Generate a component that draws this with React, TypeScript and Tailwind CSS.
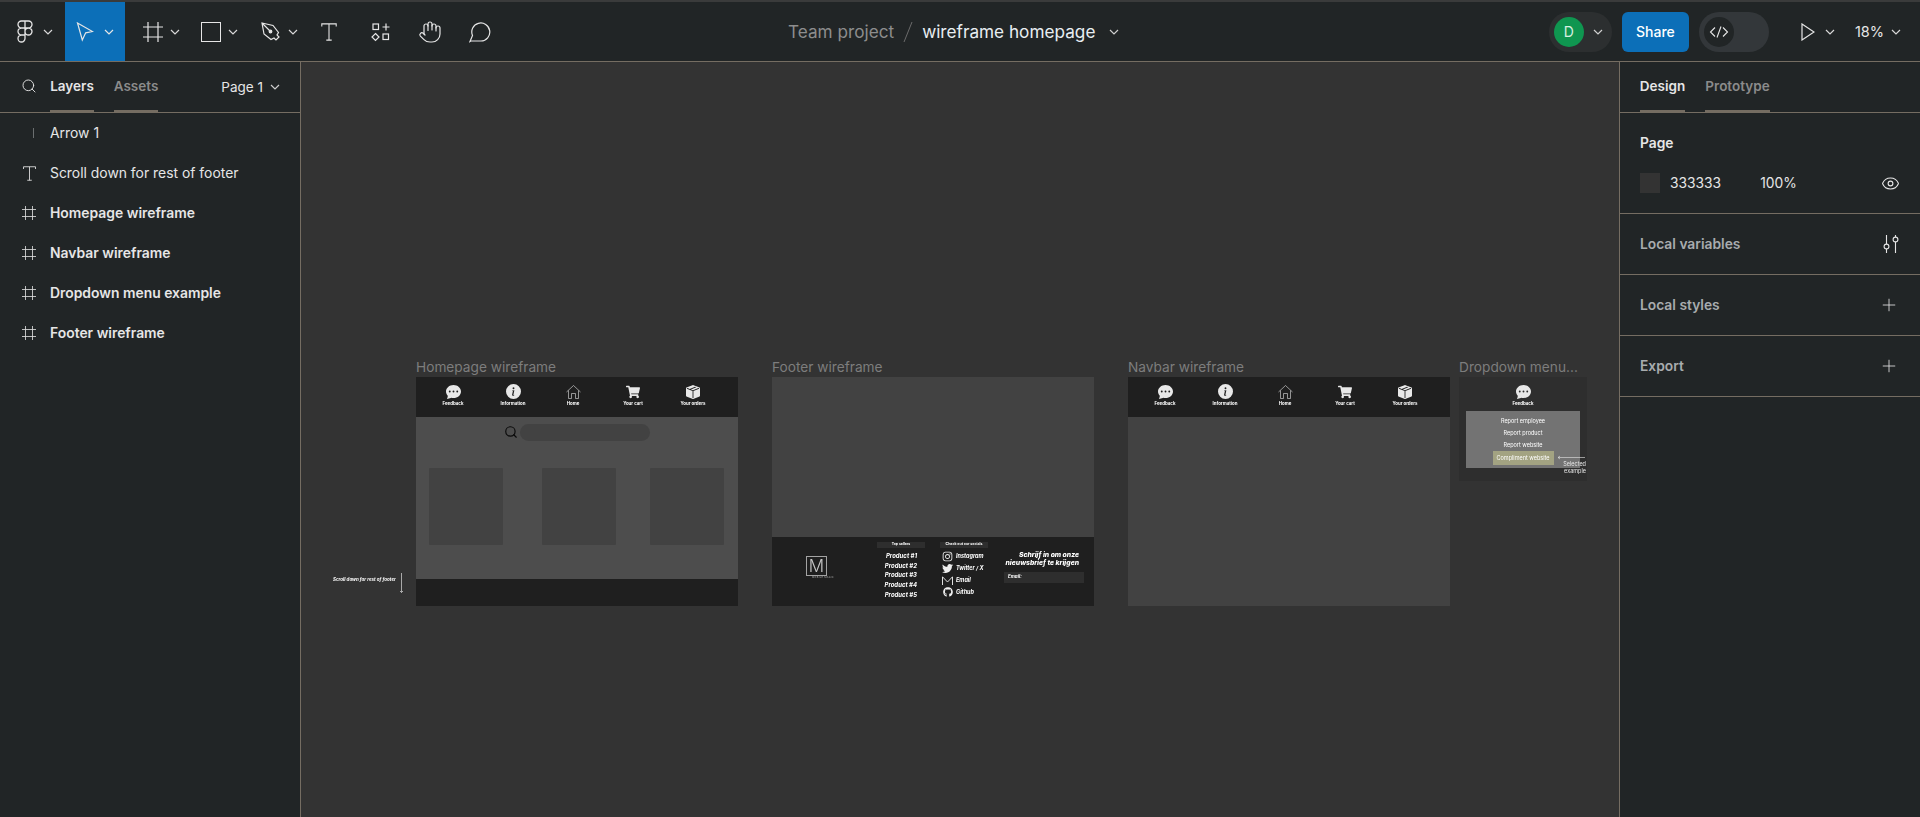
import { Eye, Hand, Plus, Search } from 'lucide-react';
import { BsBoxSeamFill, BsChatDotsFill, BsInfoCircleFill } from 'react-icons/bs';
import { FaGithub, FaInstagram, FaShoppingCart, FaTwitter } from 'react-icons/fa';

const inter = '[font-family:Inter,sans-serif]';

function Chevron({ className = '' }: { className?: string }) {
  return (
    <svg width="10" height="6" viewBox="0 0 10 6" fill="none" className={className}>
      <path d="M1 1l4 4 4-4" stroke="currentColor" strokeWidth="1.2" />
    </svg>
  );
}

function FrameIcon({ size = 20 }: { size?: number }) {
  return (
    <svg width={size} height={size} viewBox="0 0 20 20" fill="none" stroke="currentColor" strokeWidth="1.2">
      <path d="M5 0v20M15 0v20M0 5h20M0 15h20" />
    </svg>
  );
}

function TextIcon({ size = 18 }: { size?: number }) {
  return (
    <svg width={size} height={size} viewBox="0 0 18 20" fill="none" stroke="currentColor" strokeWidth="1.2">
      <path d="M1 4V1h16v3M9 1v18M6 19h6" />
    </svg>
  );
}

function FigmaLogo() {
  return (
    <svg width="16" height="24" viewBox="0 0 16 24" fill="none" stroke="currentColor" strokeWidth="1.3">
      <path d="M8 1H4.5a3.5 3.5 0 0 0 0 7H8zM8 1h3.5a3.5 3.5 0 0 1 0 7H8zM8 8H4.5a3.5 3.5 0 0 0 0 7H8zM8 11.500a3.500 3.500 0 1 1 7 0 3.500 3.500 0 0 1-7 0zM8 15H4.500a3.500 3.500 0 1 0 3.500 3.500z" />
    </svg>
  );
}

function CursorIcon() {
  return (
    <svg width="18" height="20" viewBox="0 0 18 20" fill="none" stroke="currentColor" strokeWidth="1.2">
      <path d="M1.500 1l15 8.500-6.800 1.300-3.400 7.200z" />
    </svg>
  );
}

function PenIcon() {
  return (
    <svg width="20" height="20" viewBox="0 0 20 20" fill="none" stroke="currentColor" strokeWidth="1.2">
      <path d="M1 1l11 2.500 5.500 7-1.500 2.500 2 2-3 3-2-2-3 1.500-7-5.500zM1 1l7.500 7.500" />
      <circle cx="9.500" cy="9.500" r="1.300" fill="currentColor" />
    </svg>
  );
}

function ActionsIcon() {
  return (
    <svg width="20" height="20" viewBox="0 0 20 20" fill="none" stroke="currentColor" strokeWidth="1.2">
      <rect x="2" y="2" width="5.500" height="5.500" />
      <path d="M15 1.500v7M11.500 5h7" />
      <path d="M4.500 11.500l3.500 3.500-3.500 3.500L1 15z" />
      <rect x="12" y="12" width="5.500" height="5.500" />
    </svg>
  );
}

function CommentIcon() {
  return (
    <svg width="22" height="22" viewBox="0 0 22 22" fill="none" stroke="currentColor" strokeWidth="1.2">
      <path d="M1 20.500l2.500-6A9 9 0 1 1 12 20H2z" />
    </svg>
  );
}

function VariablesIcon() {
  return (
    <svg width="16" height="18" viewBox="0 0 16 18" fill="none" stroke="currentColor" strokeWidth="1.1">
      <path d="M3.500 0v9M3.500 14v4M12.500 0v2M12.500 7v11" />
      <circle cx="3.500" cy="11.500" r="2.400" />
      <circle cx="12.500" cy="4.500" r="2.400" />
    </svg>
  );
}

function HomeGlyph() {
  return (
    <svg width="15" height="14" viewBox="0 0 15 14" fill="none" stroke="#e5e5e5" strokeWidth="0.6">
      <path d="M0.500 7L7.500 0.500 14.500 7M2.500 5.500V13.500H5.500V8.500H9.500V13.500H12.500V5.500" />
    </svg>
  );
}

function MailGlyph() {
  return (
    <svg width="11" height="9" viewBox="0 0 11 9" fill="none" stroke="#f5f5f5" strokeWidth="0.9">
      <path d="M0.500 9V0.800L5.500 6 10.500 0.800V9" />
    </svg>
  );
}

function ToolGroup({ children, chevron = true }: { children: React.ReactNode; chevron?: boolean }) {
  return (
    <div className="flex h-full items-center gap-[7px]">
      {children}
      {chevron && <Chevron className="text-[#d8d8d8]" />}
    </div>
  );
}

function Toolbar() {
  return (
    <header className={`flex h-[62px] shrink-0 items-stretch border-t-2 border-b border-t-[#3a3b3b] border-b-[#756d62] bg-[#212526] text-[#e6e6e6] ${inter}`}>
      <div className="flex w-[788px] shrink-0 items-center">
        <div className="ml-[17px] flex w-[48px] items-center gap-[10px]">
          <FigmaLogo />
          <Chevron className="text-[#d8d8d8]" />
        </div>
        <div className="flex h-full w-[60px] items-center justify-center gap-[10px] bg-[#0c6fb8]">
          <CursorIcon />
          <Chevron />
        </div>
        <div className="ml-[18px] flex h-full items-center">
          <ToolGroup><FrameIcon /></ToolGroup>
          <div className="ml-[21px]"><ToolGroup><div className="h-[20px] w-[20px] border border-[#e6e6e6]" /></ToolGroup></div>
          <div className="ml-[23px]"><ToolGroup><PenIcon /></ToolGroup></div>
        </div>
        <div className="ml-[22px]"><TextIcon /></div>
        <div className="ml-[33px]"><ActionsIcon /></div>
        <div className="ml-[27px]"><Hand size={24} strokeWidth={1.2} /></div>
        <div className="ml-[27px]"><CommentIcon /></div>
      </div>

      <div className="flex items-center pt-[1px] text-[17.200px]">
        <span className="text-[#8d8d8d]">Team project</span>
        <svg width="10" height="22" viewBox="0 0 10 22" className="mx-[9px] text-[#6b6b6b]" stroke="currentColor">
          <path d="M9 1L1 21" />
        </svg>
        <span className="text-[#e8eef2]">wireframe homepage</span>
        <Chevron className="ml-[14px] text-[#cfcfcf]" />
      </div>

      <div className="ml-auto flex items-center pr-[19px]">
        <div className="flex h-[40px] w-[63px] items-center rounded-full bg-[#2c2f30] pl-[5px]">
          <div className="flex h-[30px] w-[30px] items-center justify-center rounded-full bg-[#0f9650] text-[14px] text-[#d9f0e2]">D</div>
          <Chevron className="ml-[9px] text-[#cfcfcf]" />
        </div>
        <div className="ml-[10px] flex h-[40px] w-[67px] items-center justify-center rounded-md bg-[#0c6fb8] text-[14px] font-medium text-white">Share</div>
        <div className="ml-[10px] flex h-[40px] w-[70px] items-center rounded-full bg-[#33373a] pl-[5px]">
          <div className="flex h-[30px] w-[30px] items-center justify-center rounded-full bg-[#212526]">
            <svg width="20" height="12" viewBox="0 0 20 12" fill="none" stroke="currentColor" strokeWidth="1.1">
              <path d="M6 1.500L1.500 6 6 10.500M14 1.500L18.500 6 14 10.500M12 0.500L8 11.500" />
            </svg>
          </div>
        </div>
        <svg width="14" height="18" viewBox="0 0 14 18" fill="none" stroke="currentColor" strokeWidth="1.2" className="ml-[32px]">
          <path d="M1 1l12 8-12 8z" />
        </svg>
        <Chevron className="ml-[10px] text-[#d8d8d8]" />
        <span className="ml-[20px] text-[14.500px]">18%</span>
        <Chevron className="ml-[7px] text-[#d8d8d8]" />
      </div>
    </header>
  );
}

const layers = [
  { name: 'Scroll down for rest of footer', kind: 'text' },
  { name: 'Homepage wireframe', kind: 'frame' },
  { name: 'Navbar wireframe', kind: 'frame' },
  { name: 'Dropdown menu example', kind: 'frame' },
  { name: 'Footer wireframe', kind: 'frame' },
];

function LayersPanel() {
  return (
    <aside className={`flex w-[301px] shrink-0 flex-col border-r border-[#756d62] bg-[#212526] text-[13.900px] text-[#e6e6e6] ${inter}`}>
      <div className="flex h-[51px] shrink-0 items-stretch border-b border-[#756d62] pl-[21px] pr-[20px] text-[13.500px]">
        <Search size={16} strokeWidth={1.4} className="mt-[16px]" />
        <div className="ml-[13px] flex h-[50px] w-[44px] items-center justify-center whitespace-nowrap border-b-2 border-[#756d62] font-semibold">Layers</div>
        <div className="ml-[20px] flex h-[50px] w-[44px] items-center justify-center whitespace-nowrap border-b-2 border-[#756d62] font-semibold text-[#8b8b8b]">Assets</div>
        <div className="ml-auto flex items-center gap-[7px]">
          <span>Page 1</span>
          <Chevron className="text-[#cfcfcf]" />
        </div>
      </div>
      <div>
        <div className="flex h-[40px] items-center">
          <div className="ml-[33px] h-[10px] w-px bg-[#6b6f70]" />
          <span className="ml-[16px]">Arrow 1</span>
        </div>
        {layers.map((layer) => (
          <div key={layer.name} className="flex h-[40px] items-center">
            <div className="flex w-[50px] justify-center pl-[14px] pr-[6px] text-[#dcdcdc]">
              {layer.kind === 'text' ? <TextIcon size={15} /> : <FrameIcon size={14} />}
            </div>
            <span className={layer.kind === 'frame' ? 'font-semibold' : ''}>{layer.name}</span>
          </div>
        ))}
      </div>
    </aside>
  );
}

function SectionRow({ label, icon }: { label: string; icon: React.ReactNode }) {
  return (
    <div className="flex h-[61px] items-center justify-between border-b border-[#756d62] pl-[20px] pr-[21px]">
      <span className="font-semibold text-[#a8acae]">{label}</span>
      {icon}
    </div>
  );
}

function DesignPanel() {
  return (
    <aside className={`flex w-[301px] shrink-0 flex-col border-l border-[#756d62] bg-[#212526] text-[13.800px] leading-[20px] text-[#e6e6e6] ${inter}`}>
      <div className="flex h-[51px] shrink-0 items-stretch border-b border-[#756d62] pl-[20px] text-[13.500px]">
        <div className="flex h-[50px] w-[45px] items-center justify-center border-b-2 border-[#756d62] font-semibold">Design</div>
        <div className="ml-[20px] flex h-[50px] w-[65px] items-center justify-center border-b-2 border-[#756d62] font-semibold text-[#8b8b8b]">Prototype</div>
      </div>
      <div className="h-[101px] border-b border-[#756d62] pl-[20px] pr-[20px]">
        <div className="pt-[20px] font-semibold">Page</div>
        <div className="mt-[20px] flex items-center">
          <div className="h-[20px] w-[20px] bg-[#333333]" />
          <span className="ml-[10px]">333333</span>
          <span className="ml-[39px]">100%</span>
          <Eye size={19} strokeWidth={1.4} className="ml-auto" />
        </div>
      </div>
      <SectionRow label="Local variables" icon={<VariablesIcon />} />
      <SectionRow label="Local styles" icon={<Plus size={20} strokeWidth={1} />} />
      <SectionRow label="Export" icon={<Plus size={20} strokeWidth={1} />} />
    </aside>
  );
}

const navItems = [
  { label: 'Feedback', icon: <BsChatDotsFill size={15} color="#e8e8e8" /> },
  { label: 'Information', icon: <BsInfoCircleFill size={15} color="#e8e8e8" /> },
  { label: 'Home', icon: <HomeGlyph /> },
  { label: 'Your cart', icon: <FaShoppingCart size={14} color="#e8e8e8" /> },
  { label: 'Your orders', icon: <BsBoxSeamFill size={14} color="#e8e8e8" /> },
];

function NavItem({ label, icon }: { label: string; icon: React.ReactNode }) {
  return (
    <div className="flex w-[60px] flex-col items-center pt-[7px]">
      <div className="flex h-[15px] items-center">{icon}</div>
      <span className="mt-[2px] whitespace-nowrap text-[4.400px] font-bold leading-[6px] text-white">{label}</span>
    </div>
  );
}

function WireNav() {
  return (
    <div className="flex h-[40px] shrink-0 bg-[#1f1f1f] pl-[7px]">
      {navItems.map((item) => <NavItem key={item.label} {...item} />)}
    </div>
  );
}

function FrameLabel({ children }: { children: React.ReactNode }) {
  return <div className={`h-[20px] whitespace-nowrap pt-[1px] text-[13.700px] leading-[19px] text-[#7d7d7d] ${inter}`}>{children}</div>;
}

function HomepageFrame() {
  return (
    <div className="absolute left-[115px] top-[295px] w-[322px]">
      <FrameLabel>Homepage wireframe</FrameLabel>
      <div className={`flex h-[229px] flex-col blur-[0.3px] ${inter}`}>
        <WireNav />
        <div className="h-[162px] bg-[#4d4d4d]">
          <div className="flex h-[51px] items-start pl-[88px] pt-[7px]">
            <Search size={14} strokeWidth={2} color="#0a0a0a" className="mt-[1px]" />
            <div className="ml-[2px] h-[17px] w-[130px] rounded-full bg-[#424242]" />
          </div>
          <div className="flex pl-[13px]">
            <div className="h-[77px] w-[74px] rounded-[1px] bg-[#424242]" />
            <div className="ml-[39px] h-[77px] w-[74px] rounded-[1px] bg-[#424242]" />
            <div className="ml-[34px] h-[77px] w-[74px] rounded-[1px] bg-[#424242]" />
          </div>
        </div>
        <div className="flex-1 bg-[#1f1f1f]" />
      </div>
    </div>
  );
}

const products = ['Product #1', 'Product #2', 'Product #3', 'Product #4', 'Product #5'];

const socials = [
  { label: 'Instagram', icon: <FaInstagram size={11} color="#f0f0f0" /> },
  { label: 'Twitter / X', icon: <FaTwitter size={11} color="#f0f0f0" /> },
  { label: 'Email', icon: <MailGlyph /> },
  { label: 'Github', icon: <FaGithub size={10} color="#f0f0f0" /> },
];

function FooterFrame() {
  return (
    <div className="absolute left-[471px] top-[295px] w-[322px]">
      <FrameLabel>Footer wireframe</FrameLabel>
      <div className={`flex h-[229px] flex-col blur-[0.3px] ${inter}`}>
        <div className="h-[160px] bg-[#424242]" />
        <div className="flex flex-1 bg-[#1f1f1f] text-white">
          <div className="ml-[34px] mt-[19px] w-[71px]">
            <div className="flex h-[20px] w-[21px] items-center justify-center border border-[#a3a3a3] text-[17px] font-light leading-none text-[#c8c8c8]">M</div>
            <div className="ml-[6px] whitespace-nowrap text-[2.500px] leading-[4px] tracking-[0.3px] text-[#b0b0b0]">MOBILE MAGIC</div>
          </div>
          <div className="w-[48px] pt-[5px]">
            <div className="flex h-[6px] items-center justify-center whitespace-nowrap bg-[#2e2e2e] text-[3.500px] font-bold">Top sellers</div>
            <div className="mt-[4px] flex flex-col items-end gap-[1px] pr-[8px]">
              {products.map((p) => (
                <span key={p} className="whitespace-nowrap text-[6px] font-bold italic leading-[8.700px]">{p}</span>
              ))}
            </div>
          </div>
          <div className="ml-[15px] w-[48px] pt-[5px]">
            <div className="flex h-[6px] items-center justify-center whitespace-nowrap bg-[#2e2e2e] text-[3.500px] font-bold">Check out our socials</div>
            <div className="mt-[2px] flex flex-col">
              {socials.map((s) => (
                <div key={s.label} className="flex h-[12px] items-center gap-[3px] pl-[2px]">
                  <div className="flex w-[11px] justify-center">{s.icon}</div>
                  <span className="whitespace-nowrap text-[5.500px] font-bold italic">{s.label}</span>
                </div>
              ))}
            </div>
          </div>
          <div className="ml-[16px] w-[80px] pt-[14px]">
            <div className="pr-[5px] text-right text-[6.800px] font-extrabold italic leading-[8px]">
              Schrijf in om onze nieuwsbrief te krijgen
            </div>
            <div className="mt-[5px] flex h-[11px] items-center bg-[#2e2e2e] pl-[4px] text-[4.500px] font-bold italic">Email:</div>
          </div>
        </div>
      </div>
    </div>
  );
}

function NavbarFrame() {
  return (
    <div className="absolute left-[827px] top-[295px] w-[322px]">
      <FrameLabel>Navbar wireframe</FrameLabel>
      <div className={`flex h-[229px] flex-col blur-[0.3px] ${inter}`}>
        <WireNav />
        <div className="flex-1 bg-[#424242]" />
      </div>
    </div>
  );
}

function DropdownFrame() {
  return (
    <div className="absolute left-[1158px] top-[295px] w-[128px]">
      <FrameLabel>Dropdown menu...</FrameLabel>
      <div className={`relative flex h-[104px] flex-col items-center bg-[#2e2e2e] blur-[0.3px] ${inter}`}>
        <NavItem label="Feedback" icon={<BsChatDotsFill size={15} color="#e8e8e8" />} />
        <div className="mt-[4px] flex h-[57px] w-[114px] flex-col items-center bg-[#737373] pt-[4px] text-[5.500px] leading-[12px] text-white">
          <span>Report employee</span>
          <span>Report product</span>
          <span>Report website</span>
          <span className="flex h-[14px] w-[61px] items-center justify-center whitespace-nowrap bg-[#a3a382]">Compliment website</span>
        </div>
        {/* annotation pointing at the selected row */}
        <svg width="28" height="5" viewBox="0 0 28 5" fill="none" stroke="#e5e5e5" strokeWidth="0.6" className="absolute left-[98px] top-[78px]">
          <path d="M28 2.500H1M3 1L1 2.500 3 4" />
        </svg>
        <div className="absolute right-[1px] top-[84px] whitespace-nowrap text-right text-[5.500px] leading-[6.500px] text-[#e5e5e5]">
          Selected<br />example
        </div>
      </div>
    </div>
  );
}

function Canvas() {
  return (
    <main className="relative min-w-0 flex-1 overflow-hidden bg-[#333333]">
      <HomepageFrame />
      <FooterFrame />
      <NavbarFrame />
      <DropdownFrame />
      <div className={`absolute left-[32px] top-[515px] whitespace-nowrap text-[4.500px] font-bold italic leading-[6px] text-white blur-[0.2px] ${inter}`}>
        Scroll down for rest of footer
      </div>
      <svg width="5" height="20" viewBox="0 0 5 20" fill="none" stroke="#c8c8c8" strokeWidth="0.8" className="absolute left-[98px] top-[511px]">
        <path d="M2.500 0v19.500M1 18l1.500 1.500L4 18" />
      </svg>
    </main>
  );
}

export default function App() {
  return (
    <div className="flex h-[817px] w-[1920px] flex-col overflow-hidden">
      <Toolbar />
      <div className="flex min-h-0 flex-1">
        <LayersPanel />
        <Canvas />
        <DesignPanel />
      </div>
    </div>
  );
}
